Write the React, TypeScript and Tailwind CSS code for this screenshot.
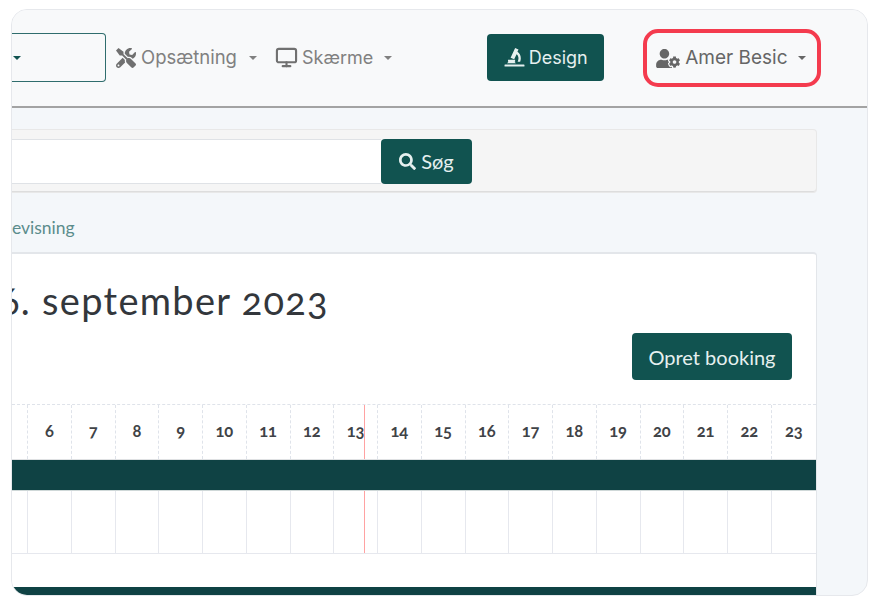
import { FaSearch, FaTools, FaUserCog } from "react-icons/fa";
import { LuMonitor } from "react-icons/lu";

const hours = [6, 7, 8, 9, 10, 11, 12, 13, 14, 15, 16, 17, 18, 19, 20, 21, 22, 23];

function Caret({ color = "border-t-[#808080]" }: { color?: string }) {
  return <span className={`inline-block h-0 w-0 border-x-[4px] border-t-[4px] border-x-transparent ${color}`} />;
}

// microscope glyph from the design button
function DesignIcon() {
  return (
    <svg viewBox="0 0 20 20" className="h-[21px] w-[21px]" fill="currentColor">
      <path d="M10.6 1l3.2 1.4-1 2.2c2.1 1.4 3.2 3.5 3.2 6.2 0 1.1-.2 2.1-.6 3.2h-2.4c.5-1 .8-2.1.8-3.2 0-1.6-.6-2.9-1.8-3.9l-2.3 4.8-3.4-1.5L10.6 1z" />
      <path d="M3.8 12.2h6.8v1.8h-.6l1.3 1.4H2.8L4.4 14h-.6z" />
      <rect x="0.5" y="16.6" width="19" height="2" rx=".5" />
    </svg>
  );
}

export default function App() {
  return (
    <div className="h-[602px] w-[872px] bg-white pt-[9px] pl-[11px] font-['Inter',sans-serif]">
      <div className="flex h-[587px] w-[857px] flex-col overflow-hidden rounded-[16px] border border-[#e6e8ec] bg-[#f4f7fa]">
        {/* navbar */}
        <nav className="flex h-[98px] shrink-0 items-center border-b-2 border-[#a3a3a3] bg-[#f8f9fa] pb-[1px] text-[18.5px] text-[#808080]">
          <div className="flex h-[49px] w-[94px] items-center rounded-r-[4px] border-[1.5px] border-l-0 border-[#2f6d6d] pl-[1px]">
            <Caret color="border-t-[#115350]" />
          </div>
          <div className="ml-[10px] flex items-center">
            <FaTools className="h-[20px] w-[20px] text-[#707070]" />
            <span className="ml-[5px]">Opsætning</span>
            <span className="ml-[12px] flex"><Caret /></span>
          </div>
          <div className="ml-[18px] flex items-center">
            <LuMonitor className="h-[23px] w-[23px] text-[#707070]" strokeWidth={2.2} />
            <span className="ml-[4px] text-[18px]">Skærme</span>
            <span className="ml-[11px] flex"><Caret /></span>
          </div>
          <button className="ml-[95px] flex h-[47px] w-[117px] items-center justify-center gap-[4px] rounded-[4px] bg-[#115350] text-[18px] text-[#e6f0ef]">
            <DesignIcon />
            Design
          </button>
          <div className="ml-[39px] flex h-[58px] w-[178px] items-center rounded-[15px] border-[4px] border-[#f43b4e] pt-[1px] pl-[9px] text-[19px] text-[#666666]">
            <FaUserCog className="h-[19px] w-[24px]" />
            <span className="ml-[5px]">Amer Besic</span>
            <span className="ml-[10px] flex"><Caret color="border-t-[#666666]" /></span>
          </div>
        </nav>

        {/* page content */}
        <div className="flex w-[805px] flex-1 flex-col">
          <div className="mt-[21px] flex h-[64px] shrink-0 items-center rounded-r-[4px] border border-l-0 border-[#e8e8e8] bg-[#f5f5f5] shadow-[inset_0_-1px_0_#dddddd]">
            <div className="h-[45px] w-[369px] border-y border-[#dfe2e6] bg-white" />
            <button className="flex h-[45px] w-[91px] items-center justify-center gap-[5px] rounded-[4px] bg-[#115350] text-[20px] font-['Lato',sans-serif] text-[#e6f0ef]">
              <FaSearch className="h-[17px] w-[17px]" />
              Søg
            </button>
          </div>

          <a className="mt-[25px] block h-[20px] text-[17.5px] leading-[20px] font-['Lato',sans-serif] text-[#5b8c8c]">
            evisning
          </a>

          <div className="mt-[14px] flex flex-1 flex-col overflow-hidden rounded-tr-[4px] border-t-2 border-r border-[#e3e6ea] bg-white font-['Lato',sans-serif]">
            <div className="relative h-[150px] shrink-0 overflow-hidden">
              <h1 className="-ml-[13px] mt-[22px] text-[38px] leading-[48px] tracking-[1.3px] text-[#33373c] oldstyle-nums">6. september 2023</h1>
              <button className="absolute top-[79px] right-[24px] h-[47px] w-[160px] rounded-[4px] bg-[#115350] text-[20px] text-[#e6f0ef]">
                Opret booking
              </button>
            </div>

            <div className="grid h-[55px] shrink-0 grid-cols-[15px_repeat(17,43.75px)_1fr] border-t border-dashed border-[#dfe3ea]">
              <div />
              {hours.map((h) => (
                <div
                  key={h}
                  className="relative flex items-center justify-center border-l border-dashed border-[#dfe3ea] pb-[2px] text-[16.5px] font-bold text-[#3f4347] oldstyle-nums"
                >
                  {h}
                  {h === 13 && <span className="absolute top-0 bottom-0 left-[30px] w-0 border-l border-red-300" />}
                </div>
              ))}
            </div>

            <div className="h-[32px] shrink-0 border-y border-t-[#dfe1e3] border-b-[#cfd8d8] bg-[#0f4244]" />

            <div className="grid h-[63px] shrink-0 grid-cols-[15px_repeat(17,43.75px)_1fr] border-b border-[#e6e8ee]">
              <div />
              {hours.map((h) => (
                <div key={h} className="relative border-l border-[#e6e8ee]">
                  {h === 13 && <span className="absolute top-0 bottom-0 left-[30px] w-0 border-l border-red-300" />}
                </div>
              ))}
            </div>

            <div className="h-[33px] shrink-0" />
            <div className="flex-1 bg-[#0f4244]" />
          </div>
        </div>
      </div>
    </div>
  );
}
